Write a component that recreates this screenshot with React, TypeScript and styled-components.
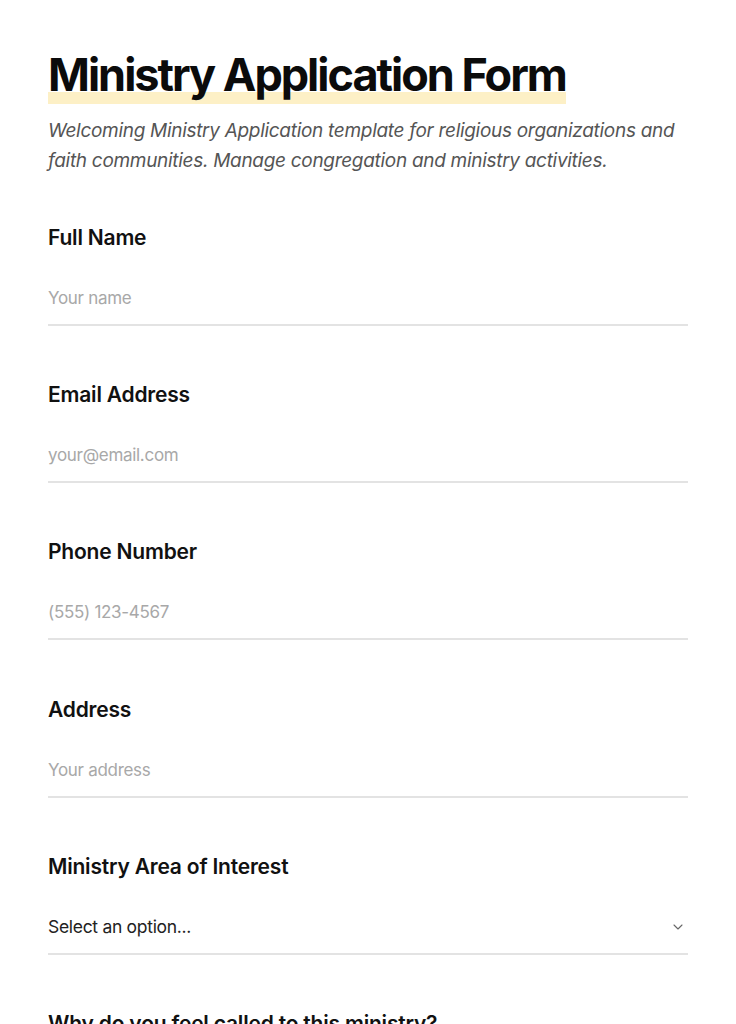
import { createGlobalStyle, styled } from "styled-components";
import { ChevronDown } from "lucide-react";

const GlobalStyle = createGlobalStyle`
  * {
    box-sizing: border-box;
  }

  body {
    margin: 0;
    background: #ffffff;
    color: #111111;
    font-family: "Inter", "Noto Sans", sans-serif;
  }
`;

const fields = [
  { label: "Full Name", placeholder: "Your name", type: "text" },
  { label: "Email Address", placeholder: "your@email.com", type: "email" },
  { label: "Phone Number", placeholder: "(555) 123-4567", type: "tel" },
  { label: "Address", placeholder: "Your address", type: "text" },
];

export default function App() {
  return (
    <>
      <GlobalStyle />
      <Page>
        <Header>
          <Title>Ministry Application Form</Title>
          <Description>
            Welcoming Ministry Application template for religious organizations and faith
            communities. Manage congregation and ministry activities.
          </Description>
        </Header>

        <Form>
          {fields.map((field) => (
            <Field key={field.label}>
              <Label>{field.label}</Label>
              <Input type={field.type} placeholder={field.placeholder} />
            </Field>
          ))}

          <Field>
            <Label>Ministry Area of Interest</Label>
            <SelectWrap>
              <Select defaultValue="">
                <option value="" disabled>
                  Select an option...
                </option>
                <option>Worship</option>
                <option>Youth</option>
                <option>Outreach</option>
              </Select>
              <Chevron>
                <ChevronDown size={16} strokeWidth={1.6} />
              </Chevron>
            </SelectWrap>
          </Field>

          <Field>
            <Label>Why do you feel called to this ministry?</Label>
          </Field>
        </Form>
      </Page>
    </>
  );
}

const Page = styled.main`
  width: 736px;
  padding: 46px 48px 40px;
`;

const Header = styled.header`
  display: flex;
  flex-direction: column;
  align-items: flex-start;
`;

const Title = styled.h1`
  display: inline-block;
  margin: 0;
  font-size: 45px;
  font-weight: 700;
  line-height: 58px;
  letter-spacing: -2px;
  color: #0b0b0b;
  background: linear-gradient(
    to bottom,
    transparent calc(100% - 12px),
    #fdf0c6 calc(100% - 12px)
  );
`;

const Description = styled.p`
  margin: 12px 0 0;
  font-size: 19px;
  font-style: italic;
  line-height: 30px;
  letter-spacing: -0.3px;
  color: #555555;
`;

const Form = styled.form`
  display: flex;
  flex-direction: column;
  gap: 55.2px;
  margin-top: 48px;
`;

const Field = styled.div`
  display: flex;
  flex-direction: column;
  gap: 20px;
`;

const Label = styled.label`
  font-size: 21px;
  font-weight: 600;
  line-height: 28px;
  letter-spacing: -0.2px;
  color: #111111;
`;

const Input = styled.input`
  width: 100%;
  padding: 14px 0;
  border: none;
  border-bottom: 2px solid #e3e3e3;
  font: inherit;
  font-size: 17px;
  line-height: 24px;
  letter-spacing: -0.3px;
  color: #222222;
  background: transparent;
  outline: none;

  &::placeholder {
    color: #a8a8a8;
  }
`;

const SelectWrap = styled.div`
  position: relative;
`;

const Select = styled.select`
  width: 100%;
  height: 54px;
  padding: 14px 0;
  border: none;
  border-bottom: 2px solid #e3e3e3;
  border-radius: 0;
  font: inherit;
  font-size: 17.5px;
  line-height: 24px;
  letter-spacing: -0.3px;
  color: #222222;
  background: transparent;
  appearance: none;
  outline: none;
`;

const Chevron = styled.span`
  position: absolute;
  right: 2px;
  top: 18px;
  display: flex;
  color: #666666;
  pointer-events: none;
`;
